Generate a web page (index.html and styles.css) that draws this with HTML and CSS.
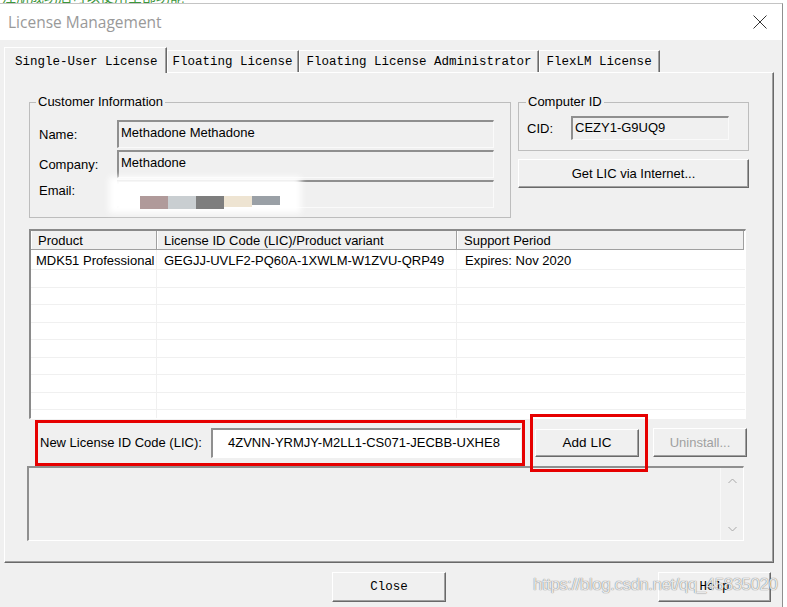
FILE: index.html
```html
<!DOCTYPE html>
<html>
<head>
<meta charset="utf-8">
<title>License Management</title>
<link rel="stylesheet" href="styles.css">
</head>
<body>
<div class="strip"><span>注册成功后可以使用全部功能</span></div>
<div class="window">
  <div class="titlebar">
    <span class="title">License Management</span>
    <svg class="xbtn" width="14" height="14" viewBox="0 0 14 14"><path d="M0.5 0.5 L13.5 13.5 M13.5 0.5 L0.5 13.5" stroke="#333" stroke-width="1" fill="none"/></svg>
  </div>
  <div class="client">
    <div class="tabs">
      <div class="tab active">Single-User License</div>
      <div class="tab">Floating License</div>
      <div class="tab">Floating License Administrator</div>
      <div class="tab">FlexLM License</div>
    </div>
    <div class="panel">
      <div class="top">
        <fieldset class="group cust">
          <legend>Customer Information</legend>
          <div class="frow"><span class="lbl">Name:</span><div class="field">Methadone Methadone</div></div>
          <div class="frow"><span class="lbl">Company:</span><div class="field">Methadone</div></div>
          <div class="frow email"><span class="lbl">Email:</span><div class="field"></div></div>
        </fieldset>
        <div class="rcol">
          <fieldset class="group cid">
            <legend>Computer ID</legend>
            <div class="frow"><span class="lbl">CID:</span><div class="field">CEZY1-G9UQ9</div></div>
          </fieldset>
          <div class="btn getlic">Get LIC via Internet...</div>
        </div>
      </div>
      <div class="list">
        <div class="lhead">
          <div class="hc c1">Product</div>
          <div class="hc c2">License ID Code (LIC)/Product variant</div>
          <div class="hc c3">Support Period</div>
        </div>
        <div class="lbody">
          <div class="lrow first"><div class="cell c1">MDK51 Professional</div><div class="cell c2">GEGJJ-UVLF2-PQ60A-1XWLM-W1ZVU-QRP49</div><div class="cell c3">Expires: Nov 2020</div></div>
          <div class="lrow"><div class="cell c1"></div><div class="cell c2"></div><div class="cell c3"></div></div>
          <div class="lrow"><div class="cell c1"></div><div class="cell c2"></div><div class="cell c3"></div></div>
          <div class="lrow"><div class="cell c1"></div><div class="cell c2"></div><div class="cell c3"></div></div>
          <div class="lrow"><div class="cell c1"></div><div class="cell c2"></div><div class="cell c3"></div></div>
          <div class="lrow"><div class="cell c1"></div><div class="cell c2"></div><div class="cell c3"></div></div>
          <div class="lrow"><div class="cell c1"></div><div class="cell c2"></div><div class="cell c3"></div></div>
          <div class="lrow"><div class="cell c1"></div><div class="cell c2"></div><div class="cell c3"></div></div>
          <div class="lrow"><div class="cell c1"></div><div class="cell c2"></div><div class="cell c3"></div></div>
          <div class="lrow"><div class="cell c1"></div><div class="cell c2"></div><div class="cell c3"></div></div>
        </div>
      </div>
      <div class="newlic">
        <span class="nlabel">New License ID Code (LIC):</span>
        <div class="input">4ZVNN-YRMJY-M2LL1-CS071-JECBB-UXHE8</div>
        <div class="btn addlic">Add LIC</div>
        <div class="btn uninstall">Uninstall...</div>
      </div>
      <div class="output">
        <div class="sb">
          <svg width="9" height="6" viewBox="0 0 9 6"><polyline points="0.5,5 4.5,1 8.5,5" fill="none" stroke="#a8a8a8" stroke-width="1"/></svg>
          <svg width="9" height="6" viewBox="0 0 9 6"><polyline points="0.5,1 4.5,5 8.5,1" fill="none" stroke="#a8a8a8" stroke-width="1"/></svg>
        </div>
      </div>
      <div class="blur"></div>
      <div class="redact"><i class="r1"></i><i class="r2"></i><i class="r3"></i><i class="r4"></i><i class="r5"></i></div>
      <div class="mark m1"></div>
      <div class="mark m2"></div>
    </div>
    <div class="bottom">
      <div class="btn mono close">Close</div>
      <div class="btn mono help">Help</div>
    </div>
  </div>
</div>
<div class="watermark">https://blog.csdn.net/qq_45835020</div>
</body>
</html>
```

FILE: styles.css
```css
* { box-sizing: border-box; }
html, body { margin: 0; padding: 0; }
body {
  width: 787px; height: 607px; overflow: hidden; position: relative;
  background: #fff;
  font-family: "Liberation Sans", Arial, sans-serif; font-size: 13px; color: #000;
}
.strip { height: 3px; overflow: hidden; }
.strip span {
  display: block; margin: -12px 0 0 2px;
  font: 14px/16px "Noto Sans CJK SC", sans-serif; color: #3c963c;
}
.window {
  width: 783px; height: 604px;
  border-top: 1px solid #c4c4c4; border-right: 1px solid #8f8f8f;
  background: #f0f0f0;
  display: flex; flex-direction: column;
}
.titlebar {
  height: 36px; background: #fff; flex: none;
  display: flex; align-items: center; justify-content: space-between;
  padding: 0 15px 0 8px;
}
.title { font: 15.5px/20px "Open Sans", sans-serif; color: #999; margin-top: -1px; }
.xbtn { display: block; margin-top: -1px; }
.client { flex: 1; position: relative; }

.tabs { display: flex; align-items: flex-end; height: 25px; margin-top: 7px; padding-left: 4px; }
.tab {
  height: 22px; padding: 1px 5px 0;
  font: 12.5px/20px "Liberation Mono", monospace; color: #000; white-space: pre;
  border-top: 1px solid #fff; border-left: 1px solid #fff; border-right: 1px solid #696969;
  box-shadow: inset -1px 0 #a0a0a0;
}
.tab:nth-child(3) { padding: 1px 6px 0 7px; }
.tab:nth-child(4) { padding: 1px 7px 0 7px; }
.tab.active { height: 26px; margin-bottom: -1px; padding: 4px 8px 0 10px; position: relative; z-index: 1; background: #f0f0f0; }

.panel {
  position: relative;
  margin-left: 4px; width: 770px; height: 491px;
  border-top: 1px solid #fff; border-left: 1px solid #fff;
  border-right: 1px solid #696969; border-bottom: 1px solid #696969;
  box-shadow: inset -1px -1px #a0a0a0;
  padding: 21px 0 0 24px;
}
.top { display: flex; gap: 7px; }
.group {
  margin: 0; min-width: 0;
  border: 1px solid #bdbdbd;
}
.group legend { font-size: 13px; line-height: 16px; padding: 0 2px; }
.cust { width: 482px; height: 124px; padding: 10px 0 0 9px; }
.cust legend { margin-left: -3px; }
.frow { display: flex; align-items: center; margin-bottom: 2px; }
.lbl { width: 78px; }
.frow.email .lbl { margin-bottom: 8px; }
.field {
  height: 28px; width: 377px;
  border-style: solid; border-width: 2px 1px 1px 2px;
  border-color: #8f8f8f #fafafa #fafafa #8f8f8f;
  background: #f0f0f0; padding: 3px 0 0 2px; line-height: 16px;
}
.rcol { width: 231px; }
.cid { width: 231px; height: 57px; padding: 6px 0 0 8px; }
.cid legend { margin-left: -1px; }
.cid .lbl { width: 44px; }
.cid .field { width: 158px; height: 24px; padding-top: 2px; }

.btn {
  display: flex; align-items: center; justify-content: center;
  background: #f0f0f0;
  border: 1px solid; border-color: #fff #696969 #696969 #fff;
  box-shadow: inset -1px -1px #a0a0a0;
}
.getlic { margin-top: 8px; height: 29px; width: 231px; }

.list {
  margin-top: 11px; width: 717px; height: 190px;
  border-style: solid; border-width: 2px 1px 1px 2px;
  border-color: #8a8a8a #fff #fff #8a8a8a;
  background: #fff; overflow: hidden;
}
.lhead { display: flex; height: 19px; }
.hc {
  background: #f0f0f0; line-height: 19px; padding-left: 7px;
  border-right: 1px solid #a0a0a0; border-bottom: 1px solid #a0a0a0;
  box-shadow: inset 1px 0 #fff;
}
.c1 { width: 126px; }
.c2 { width: 300px; }
.c3 { width: 287px; }
.lbody .c3 { width: 288px; }
.lrow { display: flex; height: 17.5px; border-bottom: 1px solid #f0f0f0; }
.lrow.first { height: 20px; }
.lrow.first .cell { padding-top: 3px; }
.cell { border-right: 1px solid #f0f0f0; line-height: 16px; white-space: nowrap; }
.cell.c1 { padding-left: 5px; }
.cell.c2 { padding-left: 7px; }
.cell.c3 { padding-left: 8px; border-right: 0; }

.newlic { display: flex; align-items: center; height: 47px; padding-left: 11px; }
.nlabel { width: 171px; }
.input {
  width: 310px; height: 30px; background: #fff;
  border-style: solid; border-width: 2px 1px 1px 2px;
  border-color: #8f8f8f #fff #fff #8f8f8f;
  padding: 0 0 0 15px; line-height: 26px;
}
.addlic { margin-left: 14px; width: 104px; height: 28px; font-size: 13.5px; }
.uninstall { margin-left: 14px; width: 94px; height: 29px; color: #a0a0a0; }

.output {
  margin-left: -2px; width: 717px; height: 75px;
  border-style: solid; border-width: 2px 1px 1px 2px;
  border-color: #8f8f8f #fff #fff #8f8f8f;
  background: #f0f0f0;
  display: flex; justify-content: flex-end;
}
.sb {
  width: 23px; height: 100%;
  border-left: 1px solid #f8f8f8;
  display: flex; flex-direction: column; align-items: center; justify-content: space-between;
  padding: 10px 0 8px;
}
.sb svg { display: block; }

.blur {
  position: absolute; left: 104px; top: 104px; width: 192px; height: 36px;
  background: #fff; filter: blur(3px);
}
.redact { position: absolute; left: 135px; top: 123px; display: flex; align-items: flex-start; }
.redact i { display: block; width: 28px; height: 13px; }
.redact .r1 { background: #b09a9a; }
.redact .r2 { background: #c9ced1; }
.redact .r3 { background: #7e7e7e; }
.redact .r4 { background: #eee4d2; height: 11px; }
.redact .r5 { background: #9aa0a6; height: 9px; }

.mark { position: absolute; border: 3px solid #e60000; }
.m1 { left: 30px; top: 347px; width: 490px; height: 46px; }
.m2 { left: 525px; top: 341px; width: 118px; height: 58px; }

.bottom { display: flex; padding-top: 9px; }
.mono { font: 12.5px/16px "Liberation Mono", monospace; }
.close { margin-left: 332px; width: 114px; height: 30px; }
.help { margin-left: 212px; width: 113px; height: 30px; }

.watermark {
  position: absolute; left: 533px; top: 574px;
  font: 17px/22px "Liberation Sans", Arial, sans-serif; letter-spacing: -0.5px;
  color: rgba(255,255,255,0.85);
  text-shadow: 0 0 1px rgba(0,0,0,0.45), 0 0 1px rgba(0,0,0,0.3);
  white-space: nowrap;
}
```
